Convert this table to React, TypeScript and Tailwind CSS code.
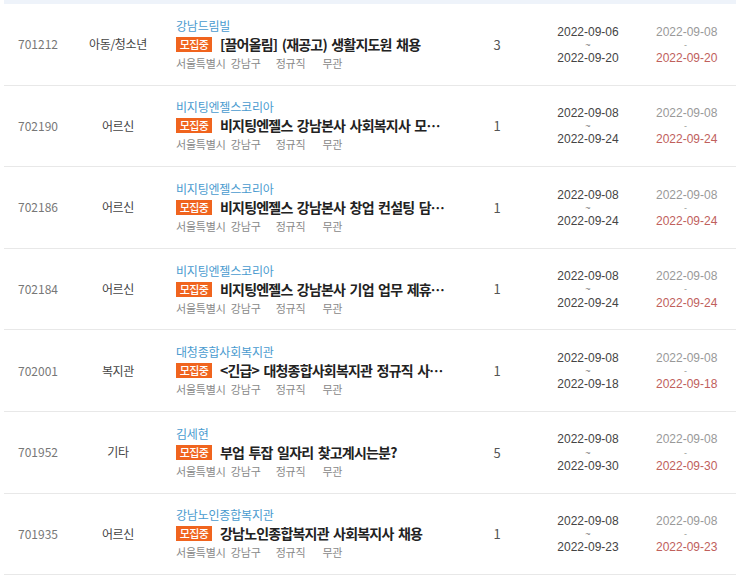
import React from "react";

type Row = {
  id: string;
  cat: string;
  org: string;
  title: string;
  loc: string;
  type: string;
  career: string;
  count: string;
  start: string;
  end: string;
  reg: string;
  due: string;
};

const rows: Row[] = [
  { id: "701212", cat: "아동/청소년", org: "강남드림빌", title: "[끌어올림] (재공고) 생활지도원 채용", loc: "서울특별시 강남구", type: "정규직", career: "무관", count: "3", start: "2022-09-06", end: "2022-09-20", reg: "2022-09-08", due: "2022-09-20" },
  { id: "702190", cat: "어르신", org: "비지팅엔젤스코리아", title: "비지팅엔젤스 강남본사 사회복지사 모…", loc: "서울특별시 강남구", type: "정규직", career: "무관", count: "1", start: "2022-09-08", end: "2022-09-24", reg: "2022-09-08", due: "2022-09-24" },
  { id: "702186", cat: "어르신", org: "비지팅엔젤스코리아", title: "비지팅엔젤스 강남본사 창업 컨설팅 담…", loc: "서울특별시 강남구", type: "정규직", career: "무관", count: "1", start: "2022-09-08", end: "2022-09-24", reg: "2022-09-08", due: "2022-09-24" },
  { id: "702184", cat: "어르신", org: "비지팅엔젤스코리아", title: "비지팅엔젤스 강남본사 기업 업무 제휴…", loc: "서울특별시 강남구", type: "정규직", career: "무관", count: "1", start: "2022-09-08", end: "2022-09-24", reg: "2022-09-08", due: "2022-09-24" },
  { id: "702001", cat: "복지관", org: "대청종합사회복지관", title: "<긴급> 대청종합사회복지관 정규직 사…", loc: "서울특별시 강남구", type: "정규직", career: "무관", count: "1", start: "2022-09-08", end: "2022-09-18", reg: "2022-09-08", due: "2022-09-18" },
  { id: "701952", cat: "기타", org: "김세현", title: "부업 투잡 일자리 찾고계시는분?", loc: "서울특별시 강남구", type: "정규직", career: "무관", count: "5", start: "2022-09-08", end: "2022-09-30", reg: "2022-09-08", due: "2022-09-30" },
  { id: "701935", cat: "어르신", org: "강남노인종합복지관", title: "강남노인종합복지관 사회복지사 채용", loc: "서울특별시 강남구", type: "정규직", career: "무관", count: "1", start: "2022-09-08", end: "2022-09-23", reg: "2022-09-08", due: "2022-09-23" },
];

const dateFont = { fontFamily: '"Liberation Sans", Arial, sans-serif' };

export default function App() {
  return (
    <div
      className="w-[740px] h-[580px] bg-white overflow-hidden"
      style={{ fontFamily: '"Noto Sans CJK KR", "Noto Sans", sans-serif' }}
    >
      <div className="ml-[4px] w-[732px]">
        <div className="h-[4px] bg-[#eef3fa]" />
        {rows.map((r) => (
          <div
            key={r.id}
            className="grid grid-cols-[68px_92px_296px_74px_108px_94px] items-center h-[81.6px] border-b border-[#e8e8e8]"
          >
            <div className="text-center text-[12px] text-[#777]">{r.id}</div>
            <div className="text-center text-[12px] text-[#444] tracking-[-0.3px]">{r.cat}</div>
            <div className="pl-[12px] flex flex-col">
              <div className="text-[12px] leading-[19px] text-[#4a9bcf] tracking-[-0.2px]">{r.org}</div>
              <div className="flex items-center h-[19px]">
                <span className="inline-flex items-center justify-center w-[36px] h-[15px] bg-[#f0641e] text-white text-[11px] font-medium leading-none tracking-[-0.6px]">
                  모집중
                </span>
                <span className="ml-[8px] text-[14px] font-bold text-[#222] whitespace-nowrap tracking-[-0.8px] [word-spacing:2px]">
                  {r.title}
                </span>
              </div>
              <div className="flex text-[11px] leading-[19px] text-[#888] tracking-[-0.2px] whitespace-pre">
                <span className="[word-spacing:3px]">{r.loc}</span>
                <span className="ml-[15px]">{r.type}</span>
                <span className="ml-[17px]">{r.career}</span>
              </div>
            </div>
            <div className="text-center text-[13px] text-[#555]">{r.count}</div>
            <div className="flex flex-col items-center pt-[2px] text-[12px] text-[#444]" style={dateFont}>
              <span className="h-[13.2px] leading-[13.2px]">{r.start}</span>
              <span className="h-[13.2px] text-[9px] text-[#777] leading-[13.2px]">~</span>
              <span className="h-[13.2px] leading-[13.2px]">{r.end}</span>
            </div>
            <div className="flex flex-col items-start pt-[2px] pl-[14px] text-[12px]" style={dateFont}>
              <span className="h-[13.2px] leading-[13.2px] text-[#999]">{r.reg}</span>
              <span className="h-[13.2px] text-[9px] text-[#999] leading-[13.2px] pl-[28px]">-</span>
              <span className="h-[13.2px] leading-[13.2px] text-[#c0605c]">{r.due}</span>
            </div>
          </div>
        ))}
      </div>
    </div>
  );
}
